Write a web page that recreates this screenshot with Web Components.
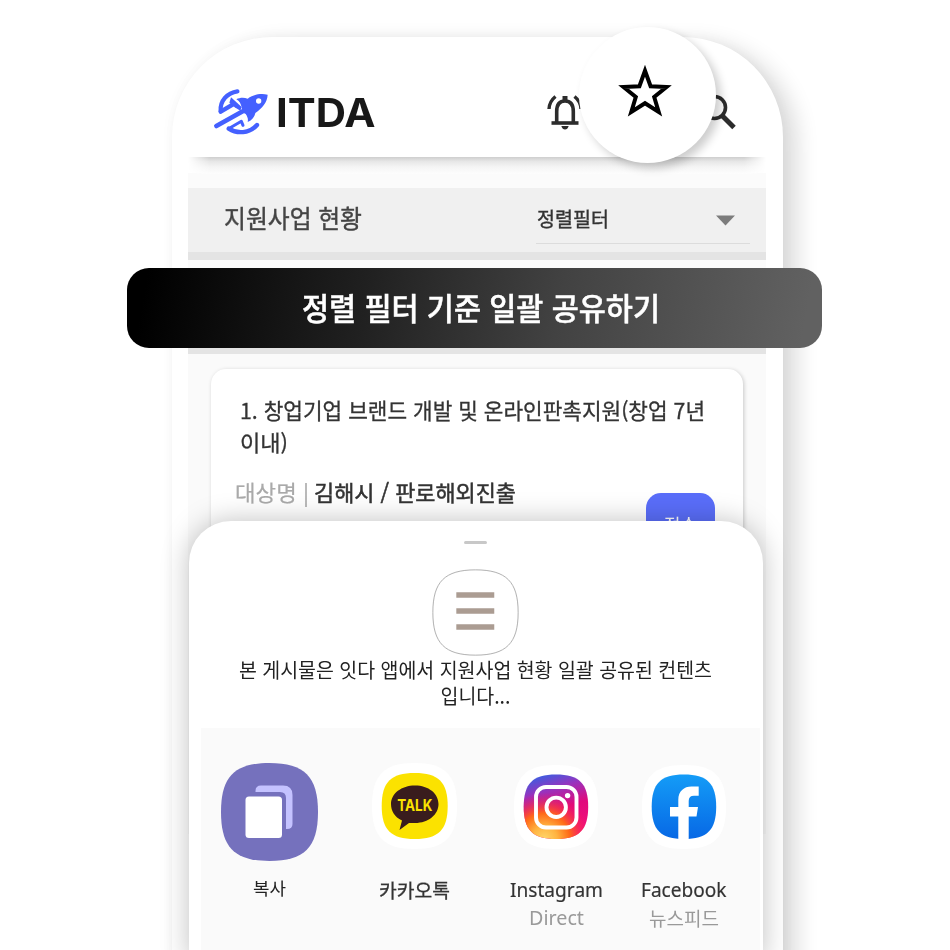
<!DOCTYPE html>
<html lang="ko">
<head>
<meta charset="utf-8">
<title>ITDA</title>
<style>
html,body{margin:0;padding:0;background:#fff}
body{width:950px;height:950px;overflow:hidden;font-family:"Noto Sans CJK KR","Noto Sans",sans-serif}
</style>
</head>
<body>
<itda-stage></itda-stage>
<script>
const define=(name,html,after)=>customElements.define(name,class extends HTMLElement{
  connectedCallback(){
    if(this.shadowRoot)return;
    this.attachShadow({mode:'open'}).innerHTML=html;
    if(after)after(this,this.shadowRoot);
  }
});

/* Text block: size, weight, colour, stretched to the width "w" */
define('fit-text',`<style>
:host{display:block;white-space:nowrap;flex:none}
span{display:inline-block;transform-origin:0 50%;vertical-align:top}
</style><span><slot></slot></span>`,(el,root)=>{
  const s=root.querySelector('span'),a=n=>el.getAttribute(n);
  el.style.fontSize=a('size')+'px';
  el.style.lineHeight=(a('lh')||a('size'))+'px';
  el.style.height=(a('lh')||a('size'))*(a('lines')||1)+'px';
  if(a('weight'))el.style.fontWeight=a('weight');
  if(a('color'))el.style.color=a('color');
  if(a('stroke'))s.style.webkitTextStroke=a('stroke')+'px currentColor';
  const w=+a('w');
  el.style.width=w+'px';
  s.style.transform='scaleX('+w/s.getBoundingClientRect().width+')';
});

define('itda-logo',`<style>
:host{display:flex;align-items:center;font-family:Inter,sans-serif}
svg{display:block;margin-right:6px}
</style>
<svg width="56.7" height="47.3" viewBox="160 205 170 142" fill="none" stroke="#4460ff" stroke-linecap="round" stroke-linejoin="round">
<path d="M233 215C203 219 180 244 183 275" stroke-width="13"/>
<path d="M183 276L220 254" stroke-width="13"/>
<path d="M214 233L246 262L242 273L225 263L209 249Z" fill="#4460ff" stroke="none"/>
<path d="M170 319L256 271" stroke-width="14"/>
<path d="M209 326L245 305L250 317" stroke-width="9"/>
<path d="M207 327C232 343 269 342 292 316" stroke-width="13"/>
<path d="M324 225C300 220 281 226 264 237C252 233 240 234 230 239C240 244 243 252 246 263L248 278L258 283C264 292 266 299 264 307C277 302 285 292 287 280C307 266 323 248 324 225Z" fill="#4460ff" stroke="none"/>
<circle cx="297" cy="244" r="8" fill="#fff" stroke="none"/>
</svg>
<fit-text style="margin-top:1px" size="39.5" lh="48" w="99.500" weight="700" color="#181818">ITDA</fit-text>`);

define('app-header',`<style>
:host{display:block;height:157px;box-sizing:border-box;position:relative;z-index:1}
.row{display:flex;justify-content:space-between;padding:51px 29px 0 25px;height:48px}
.icons{display:flex;align-items:flex-start;filter:blur(.6px)}
.bell{margin:5px 116px 0 0}.search{margin-top:0}
.shade{margin-top:20.500px;height:17px;background:linear-gradient(#cecece,#e6e6e6 25%,#f5f5f5 60%,#fdfdfd);-webkit-mask:linear-gradient(90deg,transparent,#000 22px,#000 556px,transparent);mask:linear-gradient(90deg,transparent,#000 22px,#000 556px,transparent)}
svg{display:block}
</style>
<div class="row"><itda-logo></itda-logo>
<div class="icons">
<svg class="bell" width="36" height="37" viewBox="0 0 36 37" fill="none" stroke="#2c2c2c" stroke-width="3.6"><path d="M9.700 29V18.500Q9.700 8 18 8Q26.300 8 26.300 18.500V29"/><path d="M4.500 30H31.500" stroke-width="3.600"/><path d="M18 3V8" stroke-width="5"/><path d="M14.300 33H21.700Q20.500 36.500 18 36.500T14.300 33Z" fill="#2c2c2c" stroke="none"/><path d="M2 16Q2.300 8.500 8.500 3.500M34 16Q33.700 8.500 27.500 3.500" stroke-width="3.400"/></svg>
<svg class="search" width="38" height="42" viewBox="0 0 38 42" fill="none" stroke="#2c2c2c"><circle cx="15.500" cy="19.500" r="11" stroke-width="3.600"/><path d="M23.500 28L35 39.500" stroke-width="5"/></svg>
</div></div>
<div class="shade"></div>`);

define('filter-bar',`<style>
:host{display:flex;height:64.500px;margin-top:-6.500px;background:#f0f0f0;border-bottom:8px solid #e4e4e4;justify-content:space-between;padding:0 16px 0 36px}
.title{margin-top:15.500px}
.sel{width:214px;height:56px;border-bottom:1px solid #dcdcdc;display:flex;justify-content:space-between;box-sizing:border-box}
.sel fit-text{margin:16.500px 0 0 1px}
svg{margin:27px 14px 0 0}
</style>
<fit-text class="title" size="24.500" lh="30" w="138" color="#444" stroke=".4">지원사업 현황</fit-text>
<div class="sel"><fit-text size="20" lh="30" w="72" color="#333" stroke=".4">정렬필터</fit-text>
<svg width="21" height="11"><path d="M1 .5H20L10.500 10.500Z" fill="#7c7c7c"/></svg></div>`);

define('notice-card',`<style>
:host{display:block;box-sizing:border-box;width:532px;height:300px;margin:15px 0 0 23px;border-radius:15px;background:#fff;box-shadow:1px 1px 4px rgba(0,0,0,.2);padding:25px 29px}
.meta{display:flex;margin:17.500px 0 0 -5px;align-items:flex-start}
.meta .v{margin-left:5px}
.btn{margin:-15px 0 0 406px;width:69px;height:70px;border-radius:15px;background:#5a6efa;display:flex;justify-content:center;padding-top:18.500px;box-sizing:border-box}
</style>
<fit-text size="21.500" lh="32" w="465" color="#333" stroke=".3">1. 창업기업 브랜드 개발 및 온라인판촉지원(창업 7년</fit-text>
<fit-text size="21.500" lh="32" w="48" color="#333" stroke=".3">이내)</fit-text>
<div class="meta"><fit-text size="21.500" lh="32" w="74" color="#aaa" stroke=".2">대상명 |</fit-text><fit-text class="v" size="21.500" lh="32" w="202" color="#333" stroke=".5">김해시 / 판로해외진출</fit-text></div>
<div class="btn"><fit-text size="18" lh="26" w="33" color="#fff">접수</fit-text></div>`);

define('phone-body',`<style>
:host{display:block;box-sizing:border-box;width:611px;height:960px;border-radius:100px 100px 0 0;background:#fff;box-shadow:14px 6px 22px rgba(0,0,0,.14),0 0 14px rgba(0,0,0,.035);padding:0 17px 0 16px}
.head{height:136px}
.strip{height:21px;background:#fbfbfb}
.gap{height:88px;background:#fbfbfb}
.list{height:480px;background:#fafafa;border-top:6px solid #e4e4e4;display:flow-root}
</style>
<div class="head"><app-header></app-header></div>
<div class="strip"></div>
<filter-bar></filter-bar>
<div class="gap"></div>
<div class="list"><notice-card></notice-card></div>`);

define('star-bubble',`<style>
:host{position:absolute;left:579px;top:27px;width:137px;height:136px;border-radius:50%;background:#fff;box-shadow:5px 5px 10px rgba(0,0,0,.2);z-index:2}
svg{display:block;margin:37px 0 0 38px}
</style>
<svg width="56" height="56" viewBox="0 0 56 56"><path d="M28 6.700L33.600 22.200L49.500 23L37.200 33L41.700 48L28 39.200L14.300 48L18.800 33L6.500 23L22.400 22.200Z" fill="none" stroke="#000" stroke-width="4"/></svg>`);

define('share-bar',`<style>
:host{position:absolute;left:127px;top:268px;width:695px;height:80px;border-radius:22px;background:linear-gradient(100deg,#000 3%,#202020 34%,#424242 62%,#616161 97%);z-index:3;display:flex;box-sizing:border-box;padding:18.500px 0 0 175px}
</style>
<fit-text size="30.500" lh="40" w="358" color="#fff" weight="500" stroke=".5">정렬 필터 기준 일괄 공유하기</fit-text>`);

define('share-app',`<style>
:host{display:flex;flex-direction:column;align-items:center;flex:none}
.icon{height:98px;display:flex;align-items:center}
.names{display:flex;flex-direction:column;align-items:center}
</style><div class="icon"><slot name="icon"></slot></div><div class="names"><slot></slot></div>`);

const squircle='M50 0C86 0 100 14 100 50S86 100 50 100S0 86 0 50S14 0 50 0Z';
define('share-sheet',`<style>
:host{position:absolute;left:189px;top:521px;width:574px;height:440px;border-radius:42px 42px 0 0;background:#fff;box-shadow:0 0 28px rgba(0,0,0,.25);z-index:4;display:flex;flex-direction:column;align-items:center}
.grab{width:23px;height:3px;border-radius:2px;background:#c8c8c8;margin:19.500px 1px 0 0;flex:none}
.menu{display:block;margin:25px 1px 0 0;flex:none}
.desc{margin:1px 1px 0 0;text-align:center}
.apps{width:559px;height:230px;margin:19px 0 0 9px;background:#fafafa;display:flex;flex:none}
share-app svg{display:block}
.a{width:97px;margin:35.500px 0 0 20px}
.b{width:85px;margin:29.500px 0 0 53.500px}
.c{width:94px;margin:30.500px 0 0 52.500px}
.d{width:88px;margin:30.500px 0 0 37px}
</style>
<div class="grab"></div>
<svg class="menu" width="87" height="87" viewBox="-1 -1 102 102"><path d="${squircle}" fill="#fff" stroke="#999" stroke-width=".9"/><path d="M27.500 29.500H72M27.500 48.200H72M27.500 67H72" stroke="#ab9c92" stroke-width="6.400"/></svg>
<fit-text class="desc" size="20" lh="26" lines="2" w="473" color="#222">본 게시물은 잇다 앱에서 지원사업 현황 일괄 공유된 컨텐츠<br>입니다...</fit-text>
<div class="apps">
<share-app class="a"><svg slot="icon" width="97" height="98" viewBox="0 0 97 98"><path d="${squircle}" transform="scale(.97 .98)" fill="#7571bd"/><path d="M34.500 29V28Q34.500 22.500 40 22.500H62Q71.500 22.500 71.500 32V61Q71.500 66 66 66H65V35Q65 29 59 29Z" fill="#c4c2ff"/><rect x="24.500" y="33.500" width="36.500" height="41.500" rx="3.500" fill="#fff"/></svg>
<fit-text style="margin-top:15px" size="17.500" lh="24" w="33" color="#222">복사</fit-text></share-app>
<share-app class="b"><svg slot="icon" width="85" height="86" viewBox="0 0 85 86"><path d="${squircle}" transform="scale(.85 .86)" fill="#fff"/><path d="${squircle}" transform="translate(9.700 10)scale(.66)" fill="#fbe200"/><path d="M43 22.500C56.500 22.500 66.500 30.500 66.500 41S56.500 60 43 60Q39.500 60 37 60L27.500 67L30 57.500C22.500 54 19 48 19 41C19 30.500 29.500 22.500 43 22.500Z" fill="#391c1d"/><text x="25.300" y="47.500" font-family="Inter,sans-serif" font-size="16" font-weight="700" textLength="35" lengthAdjust="spacingAndGlyphs" fill="#fbe200">TALK</text></svg>
<fit-text style="margin-top:23px" size="19.500" lh="24" w="71" color="#333" stroke=".3">카카오톡</fit-text></share-app>
<share-app class="c"><svg slot="icon" width="84" height="84" viewBox="0 0 84 84"><defs><linearGradient id="ig" x1=".3" y1="0" x2=".6" y2="1"><stop offset="0" stop-color="#3d5de0"/><stop offset=".25" stop-color="#9932bd"/><stop offset=".55" stop-color="#e00a7c"/><stop offset="1" stop-color="#f5137a"/></linearGradient><radialGradient id="iy" cx=".32" cy="1" r=".72"><stop offset="0" stop-color="#ffd66b"/><stop offset=".28" stop-color="#ffb340"/><stop offset=".55" stop-color="#ff6a18"/><stop offset="1" stop-color="#f80d60" stop-opacity="0"/></radialGradient></defs><path d="${squircle}" transform="scale(.84)" fill="#fff"/><g transform="translate(9.700 9.500)scale(.645)"><path d="${squircle}" fill="url(#ig)"/><path d="${squircle}" fill="url(#iy)"/></g><g fill="none" stroke="#fff" stroke-width="3.900"><rect x="22" y="22" width="40.500" height="40.500" rx="10"/><circle cx="42.200" cy="42.300" r="9.700"/></g><circle cx="53.600" cy="30.600" r="2.700" fill="#fff"/></svg>
<fit-text style="margin-top:20px;font-family:'Noto Sans'" size="20" lh="28" w="93" color="#333" stroke=".2">Instagram</fit-text><fit-text style="font-family:'Noto Sans'" size="20" lh="28" w="55" color="#999">Direct</fit-text></share-app>
<share-app class="d"><svg slot="icon" width="84" height="84" viewBox="0 0 84 84"><defs><linearGradient id="fb" x2="0" y2="1"><stop stop-color="#149cf7"/><stop offset="1" stop-color="#0768e5"/></linearGradient></defs><path d="${squircle}" transform="scale(.84)" fill="#fff"/><path d="${squircle}" transform="translate(9.700 9.500)scale(.645)" fill="url(#fb)"/><path d="M36.300 75V51.500H28V42H36.300V35C36.300 26 42 21.500 49.500 21.500H56.700V30.700H52Q46.700 30.700 46.700 36V42H56L54.500 51.500H46.700V75Z" fill="#fff"/></svg>
<fit-text style="margin-top:20px;font-family:'Noto Sans'" size="20" lh="28" w="85.500" color="#333" stroke=".2">Facebook</fit-text><fit-text size="19" lh="27" w="70" color="#999">뉴스피드</fit-text></share-app>
</div>`);

define('itda-stage',`<style>
:host{display:block;position:relative;width:950px;height:950px;overflow:hidden;box-sizing:border-box;padding:37px 0 0 172px;background:#fff}
</style>
<phone-body></phone-body><star-bubble></star-bubble><share-bar></share-bar><share-sheet></share-sheet>`);
</script>
</body>
</html>
